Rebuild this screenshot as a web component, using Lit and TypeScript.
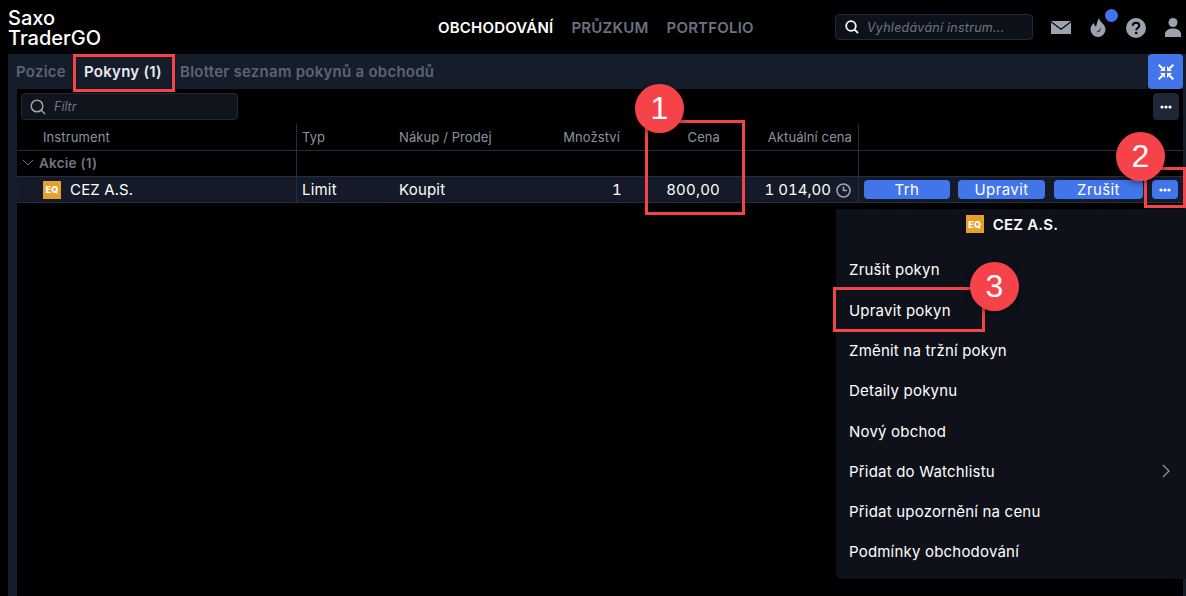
import { LitElement, html, css } from "lit";
import { customElement } from "lit/decorators.js";

const eq = html`<span class="eq">EQ</span>`;
const dots = html`<svg width="12" height="4" viewBox="0 0 12 4"><circle cx="2" cy="2" r="1.6" fill="#fff"/><circle cx="6" cy="2" r="1.6" fill="#fff"/><circle cx="10" cy="2" r="1.6" fill="#fff"/></svg>`;
const menu = ["Zrušit pokyn", "Upravit pokyn", "Změnit na tržní pokyn", "Detaily pokynu", "Nový obchod", "Přidat do Watchlistu", "Přidat upozornění na cenu", "Podmínky obchodování"];

@customElement("app-root")
export class AppRoot extends LitElement {
  static styles = css`
    :host { display: block; width: 1186px; height: 596px; background: #000; color: #fff; font-family: Inter, "Noto Sans", sans-serif; overflow: hidden; position: relative; }
    * { box-sizing: border-box; }
    .top { height: 54px; display: flex; align-items: center; position: relative; }
    .logo { width: 429px; padding: 2px 0 0 8px; font-size: 20px; line-height: 20px; font-weight: 500; }
    nav { display: flex; gap: 18px; width: 398px; font-size: 15px; font-weight: 600; color: #6b7280; padding: 0 0 0 9px; letter-spacing: .2px; }
    nav .on { color: #fff; }
    .search { width: 198px; height: 26px; margin-left: 8px; border: 1px solid #20283a; border-radius: 4px; background: #0d1119; display: flex; align-items: center; gap: 8px; padding: 0 9px; font-size: 12.5px; font-style: italic; color: #6e7687; letter-spacing: .25px; }
    .icons { position: relative; flex: 1; height: 54px; }
    .icons svg { position: absolute; }
    .badge { position: absolute; left: 72px; top: 9px; width: 13px; height: 13px; border-radius: 50%; background: #3f74ea; }
    .panel { height: 542px; margin-left: 8px; background: #151c2a; display: flex; flex-direction: column; }
    .tabs { height: 35px; flex: none; display: flex; align-items: center; font-size: 15px; font-weight: 600; color: #5c6474; position: relative; padding: 0 0 0 8px; letter-spacing: .25px; }
    .tab1 { width: 68px; }
    .tab2 { width: 96px; color: #e8eaee; }
    .collapse { position: absolute; right: 3px; top: 0; width: 35px; height: 35px; border-radius: 4px; background: #4274ea; display: flex; align-items: center; justify-content: center; }
    .body { flex: 1; margin: 0 3px 0 9px; background: #000; position: relative; }
    .tools { height: 35px; display: flex; align-items: flex-start; justify-content: space-between; padding: 4px 4px 0 4px; }
    .filter { width: 217px; height: 27px; border: 1px solid #20283a; border-radius: 4px; background: #10141d; display: flex; align-items: center; gap: 8px; padding: 0 8px; font-size: 12.5px; font-style: italic; color: #6e7687; }
    .more { width: 26px; height: 27px; border-radius: 4px; background: #1f2737; display: flex; align-items: center; justify-content: center; }
    .grid { display: grid; grid-template-columns: 280px 97px 120px 112px 99px 134px 1fr; font-size: 15px; }
    .grid > div { display: flex; align-items: center; border-bottom: 1px solid #262d3d; }
    .head { height: 27px; font-size: 13px; color: #8b93a3; letter-spacing: .1px; }
    .group { height: 26px; font-size: 13.500px; font-weight: 600; color: #6f7682; letter-spacing: .25px; padding-bottom: 2px; }
    .row { height: 26px; background: #141a27; letter-spacing: .2px; font-variant-numeric: tabular-nums; }
    .sep { border-right: 1px solid #262d3d; }
    .end { justify-content: flex-end; padding-right: 6px; }
    .p5 { padding-right: 5px; }
    .qty { padding-right: 4px; }
    .wide { padding-right: 6px; }
    .clock { gap: 5px; padding-right: 7px; letter-spacing: 0; }
    .clock svg { margin-top: 2px; }
    .pl { padding-left: 5px; }
    .inst { padding-left: 26px; }
    .akcie { padding-left: 5px; gap: 5px; }
    .eq { display: inline-flex; align-items: center; justify-content: center; width: 18px; height: 18px; background: #e5a12a; color: #fff; font-size: 9px; font-weight: 800; }
    .ml { padding-left: 26px; gap: 9px; }
    .btns { gap: 9px; padding-left: 5px; }
    .btn { height: 19px; border-radius: 4px; background: #4274ea; color: #fff; display: flex; align-items: center; justify-content: center; letter-spacing: .4px; }
    .b1 { width: 86px; margin-right: -1px; }
    .b2 { width: 87px; }
    .b3 { width: 89px; }
    .b4 { width: 26px; }
    .pop { position: absolute; left: 836px; top: 209px; width: 350px; height: 370px; background: #0e1119; border-radius: 0 0 0 6px; font-size: 15px; letter-spacing: .2px; display: flex; flex-direction: column; }
    .pop-h { height: 40.700px; flex: none; display: flex; align-items: center; justify-content: center; gap: 9px; font-weight: 600; padding: 0 0 10px 2px; }
    .item { height: 40.300px; flex: none; display: flex; align-items: center; justify-content: space-between; padding: 0 16px 0 13px; }
    .box { position: absolute; border: 3px solid #f6434a; pointer-events: none; }
    .num { position: absolute; width: 49px; height: 49px; border-radius: 50%; background: #f6434a; color: #fff; font-size: 32px; display: flex; align-items: center; justify-content: center; box-shadow: 0 2px 6px rgba(0,0,0,.45); font-family: "Liberation Sans", sans-serif; }
    .b-tab { left: 73px; top: 54px; width: 102px; height: 38px; }
    .b-cena { left: 645px; top: 120px; width: 100px; height: 95px; }
    .b-dots { left: 1144px; top: 167px; width: 42px; height: 41px; }
    .b-menu { left: 833px; top: 287px; width: 152px; height: 45px; }
    .n1 { left: 635px; top: 84px; }
    .n2 { left: 1116px; top: 132px; }
    .n3 { left: 970px; top: 262px; }
    .i-mail { left: 18px; top: 21px; }
    .i-flame { left: 57px; top: 18px; }
    .i-help { left: 93px; top: 18px; }
    .i-user { left: 132px; top: 18px; }
  `;

  render() {
    return html`
      <div class="top">
        <div class="logo">Saxo<br />TraderGO</div>
        <nav><span class="on">OBCHODOVÁNÍ</span><span>PRŮZKUM</span><span>PORTFOLIO</span></nav>
        <div class="search">
          <svg width="14" height="14" viewBox="0 0 14 14" fill="none" stroke="#fff" stroke-width="1.8"><circle cx="6" cy="6" r="4.8"/><path d="M9.6 9.6 13 13"/></svg>
          <span>Vyhledávání instrum...</span>
        </div>
        <div class="icons">
          <svg class="i-mail" width="20" height="13" viewBox="0 0 20 13"><path d="M0 0h20L10 7.500z M0 1.500V13h20V1.500L10 9z" fill="#9ca3af"/></svg>
          <svg class="i-flame" width="16" height="19" viewBox="0 0 16 19"><path fill-rule="evenodd" d="M9 0c.5 4 6.500 6 6.500 11.500a7.500 7.500 0 0 1-15 0C.5 8.500 2 6.500 4 5c0 2 .5 3 2 3.500C7 6 7 3 9 0z M10 9c.5 2.500-1 4.500-3.500 5 2.500 1 5 -1.500 3.500-5z" fill="#9ca3af"/></svg>
          <span class="badge"></span>
          <svg class="i-help" width="20" height="20" viewBox="0 0 20 20"><circle cx="10" cy="10" r="10" fill="#9ca3af"/><path d="M6.800 7.700C6.800 5.800 8.300 4.700 10 4.700c1.900 0 3.300 1.200 3.300 2.900 0 2.400-3.100 2.500-3.100 4.700" fill="none" stroke="#000" stroke-width="2"/><circle cx="10.200" cy="15" r="1.300" fill="#000"/></svg>
          <svg class="i-user" width="16" height="19" viewBox="0 0 16 19"><circle cx="8" cy="4.500" r="4.500" fill="#9ca3af"/><path d="M0 19v-3C0 12.500 4 10.500 8 10.500S16 12.500 16 16v3z" fill="#9ca3af"/></svg>
        </div>
      </div>
      <div class="panel">
        <div class="tabs">
          <span class="tab1">Pozice</span><span class="tab2">Pokyny (1)</span><span>Blotter seznam pokynů a obchodů</span>
          <div class="collapse">
            <svg width="16" height="16" viewBox="0 0 16 16"><g fill="#fff"><path d="M7 7H2L7 2z"/><path d="M9 7h5L9 2z"/><path d="M7 9H2L7 14z"/><path d="M9 9h5L9 14z"/></g><path d="M.7.7 4.500 4.500M15.300.7 11.500 4.500M.7 15.300 4.500 11.500M15.300 15.300 11.500 11.500" stroke="#fff" stroke-width="2" fill="none"/></svg>
          </div>
        </div>
        <div class="body">
          <div class="tools">
            <div class="filter">
              <svg width="16" height="16" viewBox="0 0 16 16" fill="none" stroke="#9ca3af" stroke-width="1.500"><circle cx="7" cy="7" r="5.800"/><path d="M11.200 11.200 15 15"/></svg>
              <span>Filtr</span>
            </div>
            <div class="more">${dots}</div>
          </div>
          <div class="grid">
            <div class="head sep inst">Instrument</div>
            <div class="head pl">Typ</div>
            <div class="head pl">Nákup / Prodej</div>
            <div class="head end">Množství</div>
            <div class="head end p5">Cena</div>
            <div class="head end sep wide">Aktuální cena</div>
            <div class="head"></div>

            <div class="group sep akcie">
              <svg width="12" height="7" viewBox="0 0 12 7" fill="none" stroke="#6f7682"><path d="M1 1l5 5 5-5"/></svg>Akcie (1)
            </div>
            <div class="group"></div><div class="group"></div><div class="group"></div><div class="group"></div><div class="group sep"></div><div class="group"></div>

            <div class="row sep ml">${eq}<span>CEZ A.S.</span></div>
            <div class="row pl">Limit</div>
            <div class="row pl">Koupit</div>
            <div class="row end qty">1</div>
            <div class="row end p5">800,00</div>
            <div class="row end sep clock"><span>1 014,00</span>
              <svg width="15" height="15" viewBox="0 0 15 15" fill="none" stroke="#9ca3af" stroke-width="1.600"><circle cx="7.500" cy="7.500" r="6.500"/><path d="M7.500 3.500v4h3.500"/></svg>
            </div>
            <div class="row btns">
              <div class="btn b1">Trh</div>
              <div class="btn b2">Upravit</div>
              <div class="btn b3">Zrušit</div>
              <div class="btn b4">${dots}</div>
            </div>
          </div>
        </div>
      </div>
      <div class="pop">
        <div class="pop-h">${eq}<span>CEZ A.S.</span></div>
        <div class="items">
          ${menu.map((m) => html`<div class="item"><span>${m}</span>${m.includes("Watchlistu") ? html`<svg width="8" height="14" viewBox="0 0 8 14" fill="none" stroke="#8b93a3" stroke-width="1.300"><path d="M1 1l6 6-6 6"/></svg>` : ""}</div>`)}
        </div>
      </div>
      <div class="box b-tab"></div>
      <div class="box b-cena"></div>
      <div class="box b-dots"></div>
      <div class="box b-menu"></div>
      <div class="num n1">1</div>
      <div class="num n2">2</div>
      <div class="num n3">3</div>
    `;
  }
}
